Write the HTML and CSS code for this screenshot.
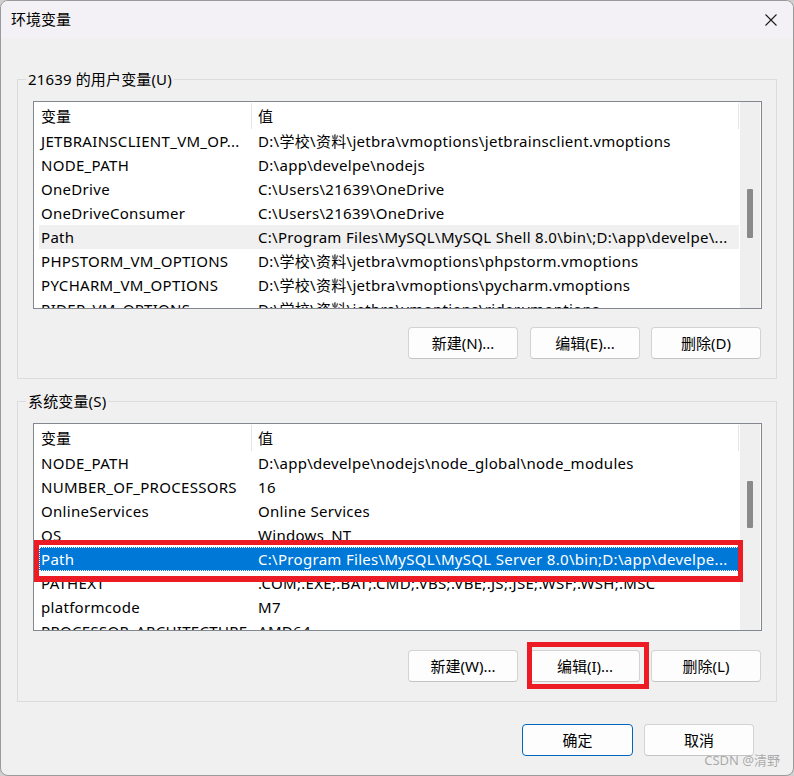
FILE: index.html
```html
<!DOCTYPE html>
<html lang="zh-CN">
<head>
<meta charset="utf-8">
<title>环境变量</title>
<link rel="stylesheet" href="styles.css">
</head>
<body>
<div class="dialog">
  <div class="titlebar">
    <span class="title">环境变量</span>
    <svg class="close" width="12" height="12" viewBox="0 0 12 12"><path d="M0.5 0.5 L11.5 11.5 M11.5 0.5 L0.5 11.5" stroke="#1b1b1b" stroke-width="1.1" fill="none"/></svg>
  </div>
  <div class="content">
    <div class="group">
      <div class="legend">21639 的用户变量(U)</div>
      <div class="list">
        <div class="list-main">
          <div class="row head"><div class="c1">变量</div><div class="c2">值</div></div>
          <div class="rows">
            <div class="row"><div class="c1">JETBRAINSCLIENT_VM_OP...</div><div class="c2">D:\学校\资料\jetbra\vmoptions\jetbrainsclient.vmoptions</div></div>
            <div class="row"><div class="c1">NODE_PATH</div><div class="c2">D:\app\develpe\nodejs</div></div>
            <div class="row"><div class="c1">OneDrive</div><div class="c2">C:\Users\21639\OneDrive</div></div>
            <div class="row"><div class="c1">OneDriveConsumer</div><div class="c2">C:\Users\21639\OneDrive</div></div>
            <div class="row hover"><div class="c1">Path</div><div class="c2">C:\Program Files\MySQL\MySQL Shell 8.0\bin\;D:\app\develpe\...</div></div>
            <div class="row"><div class="c1">PHPSTORM_VM_OPTIONS</div><div class="c2">D:\学校\资料\jetbra\vmoptions\phpstorm.vmoptions</div></div>
            <div class="row"><div class="c1">PYCHARM_VM_OPTIONS</div><div class="c2">D:\学校\资料\jetbra\vmoptions\pycharm.vmoptions</div></div>
            <div class="row"><div class="c1">RIDER_VM_OPTIONS</div><div class="c2">D:\学校\资料\jetbra\vmoptions\rider.vmoptions</div></div>
          </div>
        </div>
        <div class="scrollbar"><div class="thumb thumb-top"></div></div>
      </div>
      <div class="btnrow">
        <button class="btn first">新建(N)...</button>
        <button class="btn">编辑(E)...</button>
        <button class="btn">删除(D)</button>
      </div>
    </div>

    <div class="group group2">
      <div class="legend">系统变量(S)</div>
      <div class="list">
        <div class="list-main">
          <div class="row head"><div class="c1">变量</div><div class="c2">值</div></div>
          <div class="rows">
            <div class="row"><div class="c1">NODE_PATH</div><div class="c2">D:\app\develpe\nodejs\node_global\node_modules</div></div>
            <div class="row"><div class="c1">NUMBER_OF_PROCESSORS</div><div class="c2">16</div></div>
            <div class="row"><div class="c1">OnlineServices</div><div class="c2">Online Services</div></div>
            <div class="row"><div class="c1">OS</div><div class="c2">Windows_NT</div></div>
            <div class="row selected"><div class="c1">Path</div><div class="c2">C:\Program Files\MySQL\MySQL Server 8.0\bin;D:\app\develpe...</div></div>
            <div class="row"><div class="c1">PATHEXT</div><div class="c2">.COM;.EXE;.BAT;.CMD;.VBS;.VBE;.JS;.JSE;.WSF;.WSH;.MSC</div></div>
            <div class="row"><div class="c1">platformcode</div><div class="c2">M7</div></div>
            <div class="row"><div class="c1">PROCESSOR_ARCHITECTURE</div><div class="c2">AMD64</div></div>
          </div>
        </div>
        <div class="scrollbar"><div class="thumb thumb-bottom"></div></div>
      </div>
      <div class="btnrow btnrow2">
        <button class="btn first">新建(W)...</button>
        <button class="btn">编辑(I)...</button>
        <button class="btn">删除(L)</button>
      </div>
    </div>

    <div class="footer">
      <button class="btn primary">确定</button>
      <button class="btn">取消</button>
    </div>
  </div>

  <div class="redbox redbox-row"></div>
  <div class="redbox redbox-btn"></div>
  <div class="watermark">CSDN @清野</div>
</div>
</body>
</html>
```

FILE: styles.css
```css
* { box-sizing: border-box; }

html, body {
  margin: 0;
  padding: 0;
  background: #cfcfcf;
}

body {
  font-family: "Noto Sans", "Noto Sans CJK SC", sans-serif;
  font-size: 15px;
  color: #000;
}

.dialog {
  position: relative;
  width: 794px;
  height: 776px;
  background: #f0f0f0;
  border: 1px solid #9a9a9a;
  border-radius: 8px;
  overflow: hidden;
  display: flex;
  flex-direction: column;
}

.titlebar {
  height: 37px;
  flex: 0 0 37px;
  background: #f3f1f5;
  display: flex;
  align-items: center;
  justify-content: space-between;
  padding: 0 16px 0 10px;
}

.title {
  font-family: "Noto Sans CJK SC", sans-serif;
  font-size: 15px;
  line-height: 20px;
  margin-top: -1px;
}

.close { display: block; margin-top: 1px; }

.content {
  padding: 0 16px 0 16px;
  display: flex;
  flex-direction: column;
}

.group {
  margin-top: 41px;
  border: 1px solid #dcdcdc;
  padding: 0 14px 19px 15px;
  display: flex;
  flex-direction: column;
}

.group2 { margin-top: 22px; }

.legend {
  align-self: flex-start;
  margin: -11px 0 0 -7px;
  padding: 0 2px;
  height: 20px;
  line-height: 20px;
  background: #f0f0f0;
  white-space: nowrap;
  letter-spacing: 0.15px;
}

.list {
  margin-top: 12px;
  height: 208px;
  border: 1px solid #828790;
  background: #fff;
  display: flex;
}

.list-main {
  flex: 1 1 auto;
  min-width: 0;
  padding: 0 1px 0 5px;
  display: flex;
  flex-direction: column;
}

.row {
  display: flex;
  height: 24px;
  line-height: 24px;
  flex: 0 0 24px;
  white-space: nowrap;
  letter-spacing: 0.3px;
}

.row.head {
  height: 27px;
  flex: 0 0 27px;
  line-height: 27px;
  letter-spacing: 0;
}

.row.head .c1 { border-right: 1px solid #e5e5e5; }
.row.head .c2 { border-right: 1px solid #e5e5e5; }
.row.head .c1, .row.head .c2 { margin-top: 1px; line-height: 26px; }

.rows {
  flex: 1 1 auto;
  overflow: hidden;
}

.c1 {
  width: 213px;
  flex: 0 0 213px;
  padding-left: 2px;
  overflow: hidden;
}

.c2 {
  flex: 1 1 auto;
  padding-left: 6px;
  overflow: hidden;
}

.row.hover { background: #f0f0f0; }

.row.selected {
  background: #0078d7;
  color: #fff;
  outline: 1px dotted #ffffff;
  outline-offset: -1px;
}

.scrollbar {
  width: 21px;
  flex: 0 0 21px;
  background: #efefef;
  border-right: 1px solid #fbfbfb;
  padding-left: 7px;
}

.thumb {
  width: 6px;
  background: #8a8a8a;
  border-radius: 1px;
}

.thumb-top { margin-top: 87px; height: 49px; }
.thumb-bottom { margin-top: 57px; height: 47px; }

.btnrow {
  margin-top: 18px;
  display: flex;
  justify-content: flex-end;
  gap: 11px;
  padding-right: 1px;
}

.btnrow .first { margin-right: 1px; }

.btnrow2 { margin-top: 19px; }

.btn {
  width: 110px;
  height: 32px;
  border: 1px solid #d3d3d3;
  border-bottom-color: #c4c4c4;
  border-radius: 4px;
  background: #fdfdfd;
  font-family: "Noto Sans", "Noto Sans CJK SC", sans-serif;
  font-size: 15px;
  color: #000;
  padding: 0;
  line-height: 28px;
}

.btn.primary {
  border: 1px solid #0067c0;
  box-shadow: inset 0 0 0 1px #ffffff;
}

.footer {
  margin-top: 22px;
  display: flex;
  justify-content: flex-end;
  gap: 11px;
  padding-right: 23px;
}

.footer .primary { width: 111px; }

.redbox {
  position: absolute;
  border: 5px solid #ed1c24;
}

.redbox-row {
  left: 33px;
  top: 539px;
  width: 709px;
  height: 42px;
  border-bottom-width: 6px;
}

.redbox-btn {
  left: 526px;
  top: 641px;
  width: 122px;
  height: 47px;
}

.watermark {
  position: absolute;
  right: 13px;
  bottom: 7px;
  font-family: "Noto Sans", "Noto Sans CJK SC", sans-serif;
  font-size: 13px;
  color: rgba(120, 120, 120, 0.6);
  line-height: 16px;
}
```
